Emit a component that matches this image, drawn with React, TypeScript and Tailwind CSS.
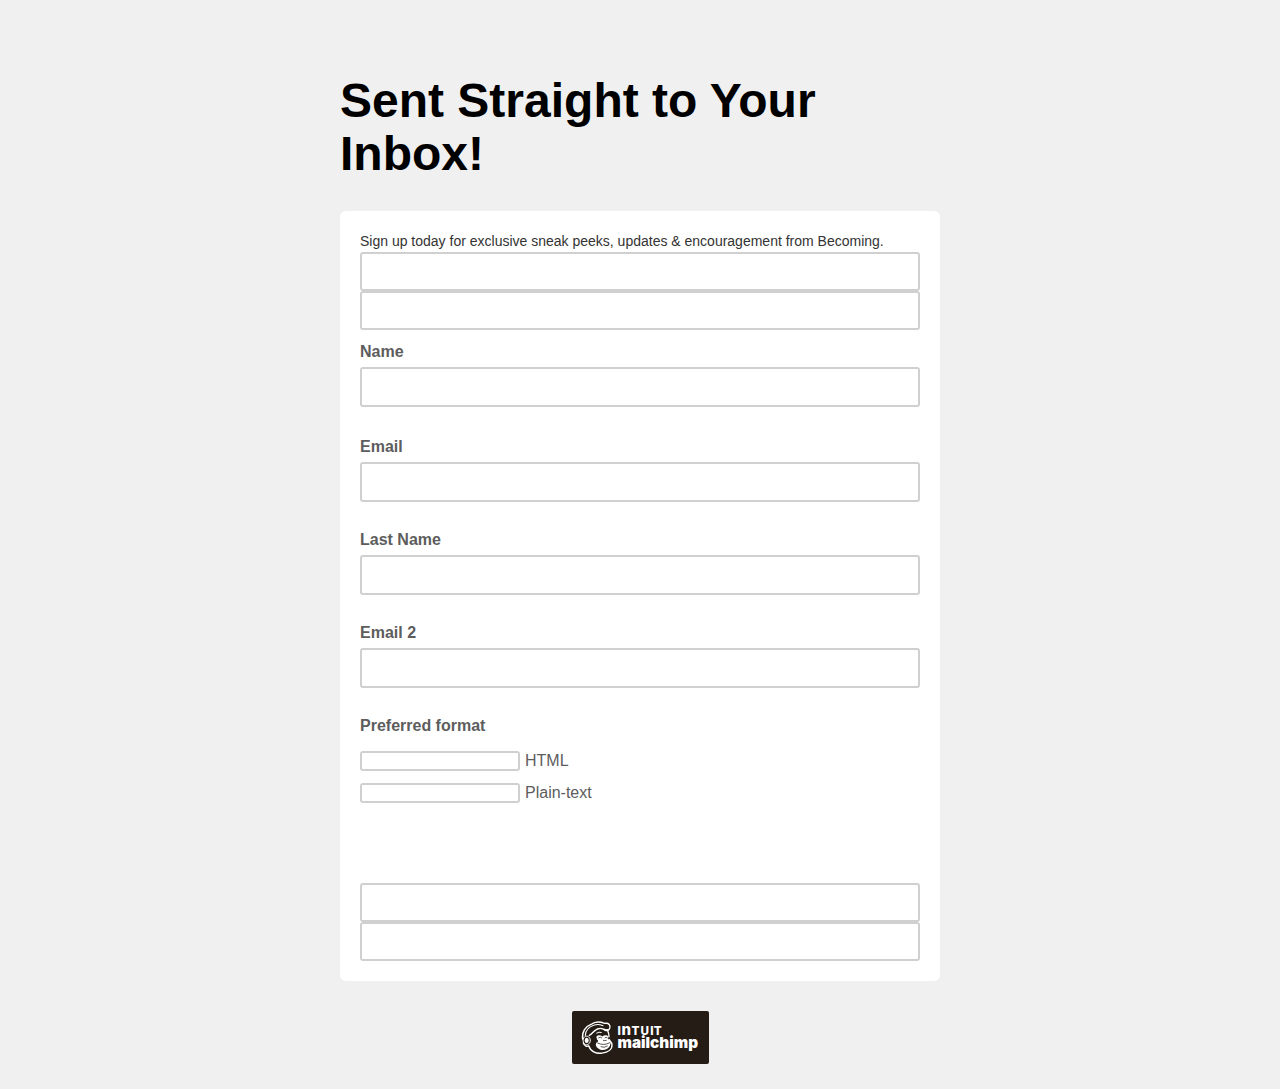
const inputBase = 'block border-2 border-[#d0d0d0] rounded-[3px] bg-white outline-none text-base px-2';

function StackedInputs({ label }: { label: string }) {
  return (
    <div>
      <input aria-label={`${label} 1`} className={`${inputBase} h-[39px] w-full`} />
      <input aria-label={`${label} 2`} className={`${inputBase} h-[39px] w-full`} />
    </div>
  );
}

function Field({ label }: { label: string }) {
  return (
    <label className="block">
      <span className="block h-6 leading-6 font-bold">{label}</span>
      <input className={`${inputBase} mt-[3px] h-10 w-full`} />
    </label>
  );
}

function FormatOption({ label }: { label: string }) {
  return (
    <label className="flex h-5 items-center gap-[5px]">
      <input className={`${inputBase} h-5 w-40`} />
      <span className="leading-5">{label}</span>
    </label>
  );
}

function MailchimpBadge() {
  return (
    <a aria-label="Intuit Mailchimp" className="block h-[53px] w-[137px] overflow-hidden rounded-[2px] bg-[#241c15]">
      <svg viewBox="0 0 137 53" className="block h-full w-full" fill="none">
        <g transform="translate(4 3.1) scale(.3333)" strokeLinecap="round" strokeLinejoin="round">
          {/* headphone band and cap */}
          <path d="M20 75C17 54 28 37 45 31C58 21 76 24 86 28C98 25 105 34 101 43C98 50 91 50 86 48" stroke="#fff" strokeWidth="4.2" />
          <path d="M28 64C29 50 38 38 55 33C64 30 74 32 81 35" stroke="#fff" strokeWidth="3.2" />
          <path d="M40 64C50 59 56 44 71 43C80 42 88 50 96 47" stroke="#fff" strokeWidth="4.2" />
          {/* ear */}
          <path d="M22 73C26 63 38 64 42 74C45 84 39 92 31 92C24 92 19 84 22 73Z" stroke="#fff" strokeWidth="3" />
          <ellipse cx="32" cy="79" rx="6" ry="8" fill="#fff" />
          {/* jaw and profile */}
          <path d="M22 87C26 97 33 98 38 95C43 111 60 120 78 117C97 115 109 105 108 91C108 85 102 82 99 76" stroke="#fff" strokeWidth="4.2" />
          <path d="M95 50C98 56 99 62 99 68" stroke="#fff" strokeWidth="4.2" />
          {/* muzzle, eyes and smile */}
          <path d="M61 67C67 62 74 63 79 67C85 62 94 63 97 68C94 74 98 78 103 82C106 87 102 90 102 95C96 108 77 111 68 104C60 99 57 92 61 86C67 84 68 78 63 76Z" fill="#fff" />
          <path d="M68 71Q73 67 77 71M87 71Q90 67 94 71M82 79Q87 81 91 79M65 87Q84 96 101 86M75 98Q84 103 94 96" stroke="#241c15" strokeWidth="2.2" />
          <path d="M62 57Q69 52 76 55" stroke="#fff" strokeWidth="3" />
        </g>
        <text fill="#fff" fontFamily="Inter, sans-serif" fontWeight="800">
          <tspan x="45.4" y="24" fontSize="11.7">I</tspan>
          <tspan x="49.6" fontSize="15">n</tspan>
          <tspan x="59.5" fontSize="11.7">T</tspan>
          <tspan x="68.5" fontSize="11.7">U</tspan>
          <tspan x="78.2" fontSize="11.7">I</tspan>
          <tspan x="81.8" fontSize="11.7">T</tspan>
        </text>
        <text x="45.5" y="37.3" fill="#fff" fontFamily="Inter, sans-serif" fontWeight="900" fontSize="15" textLength="80.5" lengthAdjust="spacingAndGlyphs">mailchimp</text>
      </svg>
    </a>
  );
}

export default function App() {
  return (
    <main className="min-h-[1089px] bg-[#f0f0f0] pt-[74px] font-['Liberation_Sans',Arial,sans-serif] text-base text-[#5d5d5d]">
      <div className="mx-auto w-[600px]">
        <h1 className="text-[48px] leading-[53px] font-bold text-black">Sent Straight to Your Inbox!</h1>
        <form className="mt-[31px] h-[770px] rounded-md bg-white px-5 pt-5">
          <p className="h-[21px] text-sm leading-[21px] text-[#333]">
            Sign up today for exclusive sneak peeks, updates &amp; encouragement from Becoming.
          </p>
          <StackedInputs label="Additional details" />
          <div className="mt-[10px]">
            <Field label="Name" />
          </div>
          <div className="mt-7 flex flex-col gap-[26px]">
            <Field label="Email" />
            <Field label="Last Name" />
            <Field label="Email 2" />
          </div>
          <fieldset className="mt-[26px]">
            <legend className="h-6 leading-6 font-bold">Preferred format</legend>
            <div className="mt-[13px] flex flex-col gap-3">
              <FormatOption label="HTML" />
              <FormatOption label="Plain-text" />
            </div>
          </fieldset>
          <div className="mt-20">
            <StackedInputs label="Confirmation" />
          </div>
        </form>
        <footer className="mt-[30px] flex justify-center pl-px">
          <MailchimpBadge />
        </footer>
      </div>
    </main>
  );
}
